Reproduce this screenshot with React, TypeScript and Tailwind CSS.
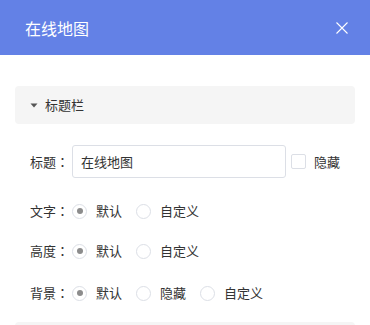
const font = { fontFamily: '"Noto Sans CJK SC", "Microsoft YaHei", sans-serif' };

function Label({ text }: { text: string }) {
  return (
    <span className="w-[42px] flex text-[13px] text-[#333]">
      {text}
      <span className="w-[13px] text-center font-['Noto_Sans_CJK_TC',sans-serif]">：</span>
    </span>
  );
}

function Radio({ label, checked }: { label: string; checked?: boolean }) {
  return (
    <div className="flex items-center mr-[14px]">
      <span className="w-[15px] h-[15px] rounded-full border border-[#dcdfe6] bg-white flex items-center justify-center">
        {checked && <span className="w-[6px] h-[6px] rounded-full bg-[#8c8c8c]" />}
      </span>
      <span className="ml-[9px] text-[13px] text-[#333]">{label}</span>
    </div>
  );
}

function RadioRow({ label, options, className }: { label: string; options: string[]; className: string }) {
  return (
    <div className={"flex items-center h-[20px] pl-[15px] " + className}>
      <Label text={label} />
      {options.map((o, i) => (
        <Radio key={o} label={o} checked={i === 0} />
      ))}
    </div>
  );
}

export default function App() {
  return (
    <div className="w-[370px] h-[325px] bg-white overflow-hidden" style={font}>
      <div className="h-[55px] bg-[#6381e6] flex items-center justify-between px-[22px]">
        <span className="text-white text-[16px] ml-[3px]">在线地图</span>
        <svg width="12" height="12" viewBox="0 0 12 12">
          <path d="M0.5 0.5 L11.5 11.5 M11.5 0.5 L0.5 11.5" stroke="white" strokeWidth="1.1" fill="none" />
        </svg>
      </div>
      <div className="px-[15px] pt-[31px]">
        <div className="h-[38px] bg-[#f5f5f5] rounded-[4px] flex items-center pl-[15px]">
          <svg width="8" height="5" viewBox="0 0 8 5">
            <path d="M0.5 0.5 L7.5 0.5 L4 4.5 Z" fill="#555" />
          </svg>
          <span className="ml-[7px] text-[13px] text-[#333]">标题栏</span>
        </div>
        <div className="flex items-center mt-[21px] pl-[15px] h-[33px]">
          <Label text="标题" />
          <div className="w-[214px] h-[33px] border border-[#dcdfe6] rounded-[3px] flex items-center pl-[8px] text-[13px] text-[#333]">
            在线地图
          </div>
          <span className="ml-[5px] w-[15px] h-[15px] border border-[#dcdfe6] rounded-[2px] bg-white" />
          <span className="ml-[8px] text-[13px] text-[#333]">隐藏</span>
        </div>
        <RadioRow label="文字" options={["默认", "自定义"]} className="mt-[23px]" />
        <RadioRow label="高度" options={["默认", "自定义"]} className="mt-[20px]" />
        <RadioRow label="背景" options={["默认", "隐藏", "自定义"]} className="mt-[22px]" />
        <div className="mt-[19px] h-[38px] bg-[#f5f5f5] rounded-[4px]" />
      </div>
    </div>
  );
}
